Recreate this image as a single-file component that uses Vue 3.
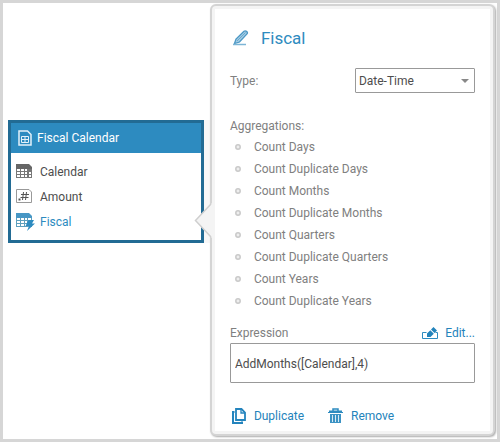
<script setup>
import { ref } from 'vue'

const type = ref('Date-Time')
const expression = ref('AddMonths([Calendar],4)')
const aggregations = [
  'Count Days',
  'Count Duplicate Days',
  'Count Months',
  'Count Duplicate Months',
  'Count Quarters',
  'Count Duplicate Quarters',
  'Count Years',
  'Count Duplicate Years',
]
</script>

<template>
  <main class="stage">
    <section class="entity">
      <h2 class="entity-head">
        <svg class="icon" width="14" height="16" viewBox="0 0 14 16" fill="none" stroke="#e4f1f9">
          <path d="M1 1h8.500l3.500 3.500v10.500h-12z" stroke-width="1.500" />
          <path d="M3.500 6.500h7v6h-7zM3.500 9.500h7M7 6.500v6" />
        </svg>
        <span>Fiscal Calendar</span>
      </h2>
      <ul class="fields">
        <li>
          <svg class="icon" width="19" height="17" viewBox="0 0 19 17">
            <path d="M0 1h13l3 3v2H0z" fill="#666" />
            <path d="M0 6h16v9H0z" fill="#777" />
            <path d="M1 6h3v2H1zM5 6h3v2H5zM9 6h2v2H9zM1 9h3v2H1zM5 9h3v2H5zM9 9h2v2H9zM13 9h2v2h-2zM1 12h3v2H1zM5 12h3v2H5zM9 12h2v2H9zM13 12h2v2h-2z" fill="#fff" />
          </svg>
          <span>Calendar</span>
        </li>
        <li>
          <svg class="icon" width="19" height="17" viewBox="0 0 19 17" fill="none" stroke="#555">
            <path d="M.5 1.500h12.500l2.500 2.500v10.500H.5z" stroke="#999" />
            <path d="M7.500 4l-1 8M10.500 4l-1 8M5 6.500h8M4.500 9.500h8" />
            <path d="M2.500 10.500h2v2h-2z" fill="#555" stroke="none" />
          </svg>
          <span>Amount</span>
        </li>
        <li class="selected">
          <svg class="icon" width="19" height="19" viewBox="0 0 19 19">
            <path d="M0 1h13l3 3v2H0z" fill="#4797c5" />
            <path d="M0 6h16v9H0z" fill="#5d9fbd" />
            <path d="M1 6h3v2H1zM5 6h3v2H5zM9 6h2v2H9zM12 6h3v2h-3zM1 9h3v2H1zM5 9h3v2H5zM9 9h2v2H9zM1 12h3v2H1zM5 12h3v2H5zM9 12h2v2H9z" fill="#fff" />
            <path d="M12.500 8h5.500l-2 3.500H19L11 19l2-5H9.500z" fill="#2d8bc0" />
          </svg>
          <span>Fiscal</span>
        </li>
      </ul>
    </section>

    <section class="popover">
      <svg class="arrow" width="18" height="38" viewBox="0 0 18 38">
        <path d="M18 1L1.500 18.500 18 36z" fill="#f4f4f4" />
        <path d="M17 2L1.500 18.500 17 35" fill="none" stroke="#cfcfcf" stroke-width="1.500" />
      </svg>
      <div class="card">
        <h1 class="title">
          <svg class="icon" width="16" height="16" viewBox="0 0 16 16">
            <path d="M1.500 13.500l1.500-4.500L11 1.300c1.500-1.200 4.200.6 3.200 2.400L6.500 12z" fill="#a3cbe3" stroke="#4c98c5" stroke-width="1.300" />
            <path d="M4 11l8.500-8.500" stroke="#6aaacf" />
            <path d="M0 14.500h13" stroke="#7db5d6" stroke-width="1.500" />
          </svg>
          <span>Fiscal</span>
        </h1>

        <div class="type-row">
          <label for="type">Type:</label>
          <div class="select-wrap">
            <select id="type" v-model="type">
              <option>Date-Time</option>
            </select>
            <svg class="caret" width="8" height="4" viewBox="0 0 8 4"><path d="M0 0h8L4 4z" fill="#888" /></svg>
          </div>
        </div>

        <h3 class="caption">Aggregations:</h3>
        <ul class="aggregations">
          <li v-for="name in aggregations" :key="name">
            <svg width="6" height="6" viewBox="0 0 6 6">
              <circle cx="3" cy="3" r="2.200" fill="#eee" stroke="#c9c9c9" stroke-width="1.500" />
            </svg>
            <span>{{ name }}</span>
          </li>
        </ul>

        <div class="expression-head">
          <label for="expression">Expression</label>
          <button type="button" class="action edit">
            <svg class="icon" width="17" height="13" viewBox="0 0 17 13">
              <path d="M4.500 5.500h-4v6h15v-6h-2" fill="none" stroke="#2d8bc0" />
              <path d="M11.500 0L15 3.500l-2.500 2.500L9 2.500zM8.300 3.200l3.500 3.500L8.500 10H5V6.500z" fill="#2383bb" />
            </svg>
            <span>Edit...</span>
          </button>
        </div>
        <input id="expression" v-model="expression" class="expression" type="text" />

        <div class="actions">
          <button type="button" class="action">
            <svg class="icon" width="14" height="16" viewBox="0 0 14 16" fill="none" stroke="#2484bd">
              <path d="M4 1h5.500L13 4.500V12H4z" stroke-width="1.800" />
              <path d="M9 1v4h4" stroke-width="1.300" />
              <path d="M2.500 4H1v11h9v-1.500" stroke-width="2" />
            </svg>
            <span>Duplicate</span>
          </button>
          <button type="button" class="action">
            <svg class="icon" width="15" height="16" viewBox="0 0 15 16">
              <path d="M5 3V1h5v2" fill="none" stroke="#2d8bc0" stroke-width="1.500" />
              <path d="M1 2.500h13V4h1v1H0V4h1z" fill="#2d8bc0" />
              <path d="M2 6h11v9H2z" fill="#3c93c4" />
              <path d="M4.500 7v7M7.500 7v7M10.500 7v7" stroke="#d9eaf4" />
            </svg>
            <span>Remove</span>
          </button>
        </div>
      </div>
    </section>
  </main>
</template>

<style>
body {
  margin: 0;
}
</style>

<style scoped>
* {
  box-sizing: border-box;
}

.stage {
  display: flex;
  align-items: flex-start;
  min-height: 100vh;
  padding: 1px 2px 2px 5px;
  border: 3px solid #d6d6d6;
  background: #fff;
  color: #4d4d4d;
  font: 12px/16px Tahoma, Roboto, sans-serif;
}

h1,
h2,
h3,
ul {
  margin: 0;
  padding: 0;
  font-weight: normal;
  list-style: none;
}

.icon {
  flex: none;
}

.entity {
  flex: 196 1 0;
  margin-top: 116px;
  border: 3px solid #226b94;
  box-shadow: 6px 0 #f7f7f7;
}

.entity-head {
  display: flex;
  align-items: center;
  gap: 5px;
  height: 30px;
  padding-left: 7px;
  background: #2d8bc0;
  color: #fff;
  font-size: 12px;
}

.fields {
  padding: 6px 5px;
}

.fields li {
  display: flex;
  align-items: center;
  gap: 5px;
  height: 25px;
}

.fields .selected {
  color: #2d8bc0;
}

.popover {
  position: relative;
  flex: 284 1 0;
  margin-left: 6px;
  padding: 3px;
  border: 2px solid #d4d4d4;
  border-radius: 6px;
  background: #f4f4f4;
  box-shadow: 1px 1px 2px #aaa;
}

.arrow {
  position: absolute;
  top: 196px;
  left: -18px;
}

.card {
  padding: 17px 15px 7px;
  background: #fff;
  color: #808080;
}

.title {
  display: flex;
  align-items: center;
  gap: 12px;
  padding-left: 3px;
  color: #2d8bc0;
  font-size: 17px;
  line-height: 24px;
}

.type-row {
  display: flex;
  align-items: center;
  justify-content: space-between;
  margin-top: 18px;
}

.select-wrap {
  position: relative;
  width: 49%;
}

select {
  display: block;
  width: 100%;
  height: 25px;
  padding: 0 3px;
  border: 1px solid #999;
  border-radius: 1px;
  appearance: none;
  background: #fff;
  color: #4d4d4d;
  font: inherit;
}

.caret {
  position: absolute;
  top: 11px;
  right: 6px;
  pointer-events: none;
}

.caption {
  margin-top: 25px;
  font-size: 12px;
}

.aggregations {
  padding: 2px 5px;
}

.aggregations li {
  display: flex;
  align-items: center;
  gap: 13px;
  height: 22px;
}

.expression-head {
  display: flex;
  align-items: center;
  justify-content: space-between;
  margin-top: 11px;
}

.action {
  display: flex;
  align-items: center;
  gap: 8px;
  padding: 0;
  border: 0;
  background: none;
  color: #2383bb;
  font: inherit;
}

.edit {
  gap: 6px;
}

.expression {
  display: block;
  width: 100%;
  height: 40px;
  margin-top: 2px;
  padding: 2px 4px 0;
  border: 1px solid #999;
  border-radius: 1px;
  background: #fff;
  color: #4d4d4d;
  font: inherit;
}

.actions {
  display: flex;
  gap: 24px;
  margin-top: 25px;
  padding-left: 2px;
}
</style>
